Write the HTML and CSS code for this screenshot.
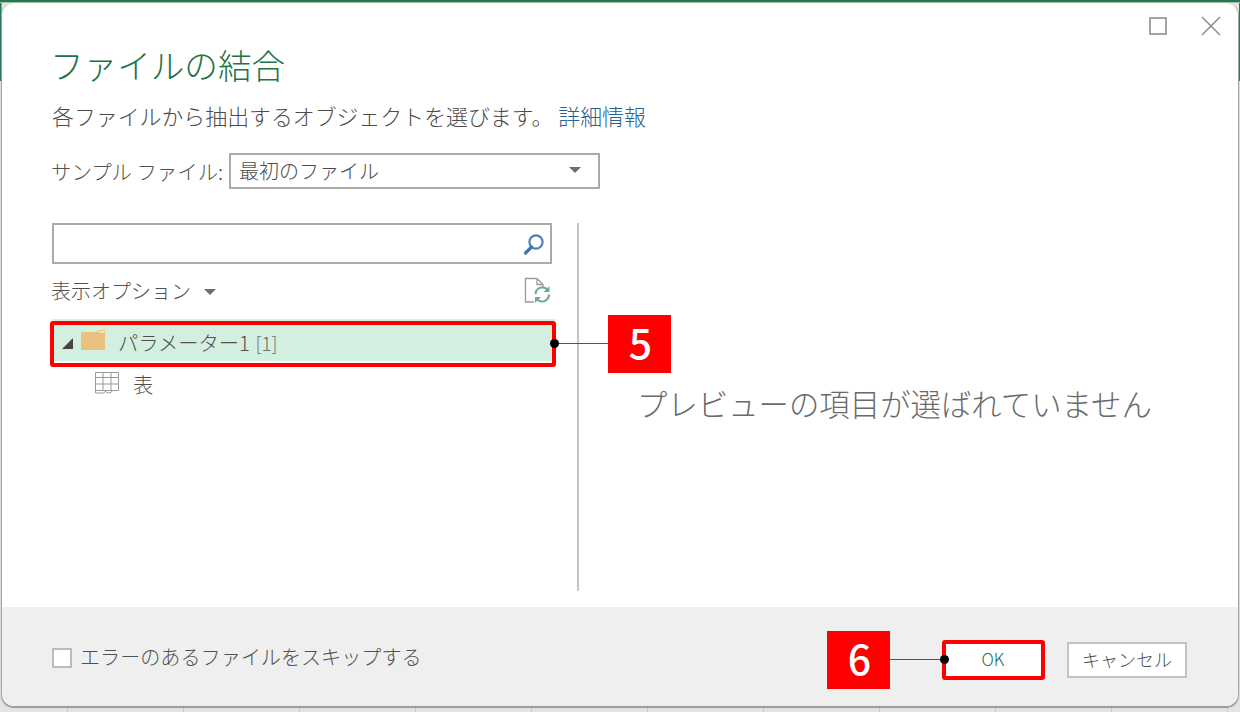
FILE: index.html
```html
<!DOCTYPE html>
<html lang="ja">
<head>
<meta charset="utf-8">
<title>ファイルの結合</title>
<link rel="stylesheet" href="styles.css">
</head>
<body>
<div class="sheet">
  <div class="dialog">
    <div class="window-controls">
      <svg class="ctl" width="18" height="18" viewBox="0 0 18 18"><rect x="1" y="1" width="16" height="16" fill="none" stroke="#8f8f8f" stroke-width="1.6"/></svg>
      <svg class="ctl" width="20" height="20" viewBox="0 0 20 20"><path d="M1 1L19 19M19 1L1 19" fill="none" stroke="#8f8f8f" stroke-width="1.6"/></svg>
    </div>
    <main class="content">
      <h1 class="title">ファイルの結合</h1>
      <p class="subtitle">各ファイルから抽出するオブジェクトを選びます。<a class="link">詳細情報</a></p>
      <div class="sample-row">
        <span class="sample-label">サンプル ファイル:</span>
        <div class="select"><span>最初のファイル</span><i class="caret"></i></div>
      </div>
      <div class="panes">
        <section class="left">
          <div class="search">
            <svg width="24" height="24" viewBox="0 0 24 24"><circle cx="14" cy="10" r="6.6" fill="none" stroke="#4f81b8" stroke-width="2.2"/><path d="M9.5 15L3.5 21" stroke="#3f74ad" stroke-width="3.2" stroke-linecap="round"/></svg>
          </div>
          <div class="options">
            <span class="options-label">表示オプション<i class="caret small"></i></span>
            <svg width="28" height="28" viewBox="0 0 28 28"><path d="M14 2.5H2.5V26H11M14 2.5L20 8.5V11M14 2.5V8.5H20" fill="none" stroke="#9a9a9a" stroke-width="1.3"/><path d="M12.5 18a7 7 0 0 1 12-4.5M26 18.5a7 7 0 0 1-12 4.8" fill="none" stroke="#6fae94" stroke-width="2.2"/><path d="M26.500 10v6h-6zM12 27v-6h6z" fill="#6fae94"/></svg>
          </div>
          <div class="tree-row selected">
            <i class="expander"></i>
            <svg width="26" height="20" viewBox="0 0 26 20"><path d="M1 3.500Q1 2 2.500 2H16L19 0H25V19Q25 20 24 20H2Q1 20 1 19Z" fill="#e9c17f"/><path d="M18 2.500L20 1H24.500V2.500Z" fill="#f7ecd8"/></svg>
            <span class="tree-text">パラメーター1 <span class="count">[1]</span></span>
          </div>
          <div class="tree-row child">
            <svg width="26" height="24" viewBox="0 0 26 24"><path d="M1.500 1.500H24.500V19.500H1.500ZM1.500 6.500H24.500M1.500 13H24.500M9 1.500V19.500M17 1.500V19.500" fill="none" stroke="#9a9a9a" stroke-width="1"/><path d="M1.500 19.500V22H9Q11 22 11.500 20M11.500 20Q12 22 15 22Q17.500 22 18 20" fill="none" stroke="#9a9a9a" stroke-width="1"/></svg>
            <span class="tree-text">表</span>
          </div>
        </section>
        <section class="preview">プレビューの項目が選ばれていません</section>
      </div>
    </main>
    <footer class="footer">
      <label class="skip"><i class="checkbox"></i><span class="skip-text">エラーのあるファイルをスキップする</span></label>
      <div class="buttons">
        <button class="btn ok">OK</button>
        <button class="btn">キャンセル</button>
      </div>
    </footer>
  </div>

  <div class="marker marker-tree"></div>
  <div class="marker marker-ok"></div>
  <div class="badge badge-5">5</div>
  <div class="badge badge-6">6</div>
  <div class="leader leader-5"></div>
  <div class="leader leader-6"></div>
  <i class="dot dot-5"></i>
  <i class="dot dot-6"></i>
</div>
</body>
</html>
```

FILE: styles.css
```css
* { box-sizing: border-box; }
html, body { margin: 0; padding: 0; }
body {
  width: 1240px; height: 712px; overflow: hidden; background: #fff;
  font-family: "Noto Sans CJK JP", "Noto Sans", sans-serif;
  font-weight: 300; color: #505050;
}
.sheet {
  position: relative; width: 1240px; height: 712px; padding: 3px 2px 6px;
  background:
    linear-gradient(#1f7a4d 0 2px, #a9b8ae 2px 3px, transparent 3px) top/100% 3px no-repeat,
    linear-gradient(#1f7a4d, #1f7a4d) 0 0/1.5px 81px no-repeat,
    linear-gradient(#1f7a4d, #1f7a4d) 100% 0/1.5px 81px no-repeat,
    repeating-linear-gradient(90deg, transparent 0 67px, #c9c9c9 67px 68px, transparent 68px 116px) 0 100%/100% 6px no-repeat,
    #e4e4e4;
}
.dialog {
  position: relative; height: 703px; display: flex; flex-direction: column;
  background: #fff; border-radius: 12px; overflow: hidden;
  box-shadow: 0 1px 1px 1px #9c9c9c;
}
.window-controls {
  position: absolute; top: 13px; right: 17px;
  display: flex; align-items: center; gap: 34px;
}
.ctl { display: block; }
.content { flex: 1; padding: 40px 0 0 50px; min-height: 0; }
.title {
  margin: 0 0 0 -2px; font-size: 33.600px; line-height: 44px; font-weight: 300; color: #217346;
}
.subtitle { margin: 13px 0 0; font-size: 21.900px; line-height: 32px; color: #4c4c4c; white-space: nowrap; }
.link { color: #2b6193; margin-left: 5px; }
.sample-row { display: flex; align-items: center; margin-top: 21px; height: 36px; }
.sample-label { font-size: 20.400px; width: 177px; white-space: nowrap; color: #505050; padding-bottom: 1px; margin-left: -1px; flex: none; }
.select {
  width: 371px; height: 36px; border: 2px solid #ababab; padding: 0 17px 2px 8px; margin-left: 1px;
  display: flex; align-items: center; justify-content: space-between;
  font-size: 20px; color: #4c4c4c;
}
.caret {
  display: inline-block; width: 0; height: 0;
  border-left: 6px solid transparent; border-right: 6px solid transparent; border-top: 6px solid #6e6e6e;
}
.caret.small { margin-left: 13px; vertical-align: 4px; }
.panes { display: flex; margin-top: 34px; height: 368px; }
.left { width: 500px; flex: none; }
.search {
  height: 41px; border: 2px solid #ababab; display: flex; align-items: center; justify-content: flex-end; padding-right: 4px;
}
.options {
  display: flex; align-items: center; justify-content: space-between; height: 36px; margin-top: 8px; margin-left: -1px; padding-right: 0;
  font-size: 20px; color: #505050;
}
.options svg { display: block; margin-right: 1px; }
.tree-row { display: flex; align-items: center; }
.selected { height: 42px; margin-top: 11px; background: #d2efe0; padding-left: 10px; gap: 12px; width: 503px; }
.expander {
  display: block; width: 0; height: 0; margin-right: -5px; margin-top: 7px;
  border-style: solid; border-width: 0 0 11px 11px; border-color: transparent transparent #444 transparent;
}
.tree-text { font-size: 20.300px; color: #505050; padding-top: 3px; }
.count { color: #6e6e6e; font-size: 19px; margin-left: 1px; }
.child { height: 44px; padding: 1px 0 0 42px; gap: 13px; margin-top: -1px; }
.preview {
  margin-left: 25px; flex: 1; border-left: 2px solid #c4c4c4; padding: 157px 0 0 58px;
  font-size: 30.400px; line-height: 46px; white-space: nowrap; color: #6a6a6a;
}
.footer {
  height: 99px; background: #efefef; display: flex; align-items: center; justify-content: space-between;
  padding: 2px 51px 0 50px;
}
.skip { display: flex; align-items: center; gap: 8px; font-size: 20.100px; color: #505050; }
.skip-text { padding-bottom: 3px; }
.checkbox { display: block; width: 20px; height: 20px; border: 2px solid #bcbcbc; background: #fff; }
.buttons { display: flex; gap: 24px; padding-top: 5px; }
.btn {
  width: 120px; height: 36px; border: 2px solid #c4c4c4; background: #fff; padding: 0 0 2px;
  font-family: inherit; font-weight: 300; font-size: 18px; color: #505050;
}
.btn.ok { width: 98px; color: #217346; font-size: 17px; border-color: transparent; padding: 0 2px 4px 0; }
.marker { position: absolute; border: 4px solid #f00; border-radius: 3px; }
.marker-tree { left: 50px; top: 321px; width: 506px; height: 46px; }
.marker-ok { left: 942px; top: 640px; width: 103px; height: 40px; }
.badge {
  position: absolute; background: #f00; color: #fff; width: 63px; height: 58px;
  display: flex; align-items: center; justify-content: center; padding: 0 0 6px 2px;
  font-family: "Noto Sans CJK JP", sans-serif; font-size: 41px; font-weight: 500;
}
.badge-5 { left: 608px; top: 315px; }
.badge-6 { left: 827px; top: 631px; }
.leader { position: absolute; height: 1px; background: #555; }
.leader-5 { left: 556px; top: 343px; width: 52px; }
.leader-6 { left: 890px; top: 659px; width: 54px; }
.dot { position: absolute; width: 9px; height: 9px; border-radius: 50%; background: #000; }
.dot-5 { left: 550px; top: 339px; }
.dot-6 { left: 940px; top: 655px; }
```
